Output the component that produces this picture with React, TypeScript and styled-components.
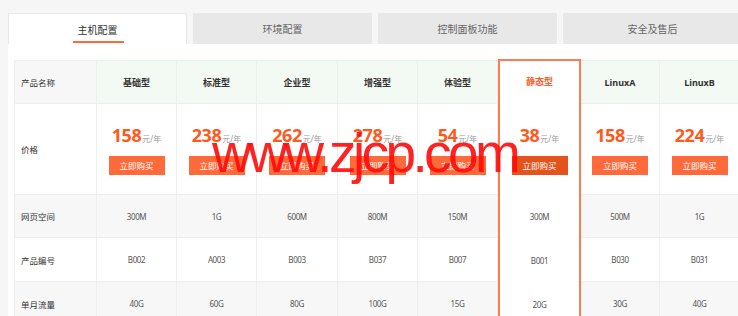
import React from 'react'
import styled, { createGlobalStyle, css } from 'styled-components'

const GlobalStyle = createGlobalStyle`
  html, body {
    margin: 0;
    padding: 0;
    background: #f6f6f6;
    overflow: hidden;
  }
  body {
    font-family: 'Noto Sans', 'Noto Sans CJK SC', sans-serif;
  }
`

const Page = styled.div`
  position: relative;
  padding: 13px 0 0 8px;
  width: 760px;
`

const Tabs = styled.div`
  display: flex;
  gap: 6px;
`

const Tab = styled.div<{ $active?: boolean }>`
  position: relative;
  width: 179px;
  height: 31px;
  box-sizing: border-box;
  display: flex;
  align-items: center;
  justify-content: center;
  font-size: 10px;
  color: #666;
  background: #e8e8e8;
  ${p => p.$active && css`
    background: #fff;
    color: #333;
    border: 1px solid #e8e8e8;
    border-bottom: none;
    &::after {
      content: '';
      position: absolute;
      left: 64px;
      width: 51px;
      bottom: 1px;
      height: 2px;
      background: #ff6a3a;
    }
  `}
`

const Panel = styled.div`
  background: #fff;
  padding: 16px 0 0 6px;
  height: 300px;
`

const Table = styled.div`
  display: flex;
  border-left: 1px solid #eeeeee;
  border-top: 1px solid #eeeeee;
`

const Column = styled.div<{ $width: number; $hot?: boolean }>`
  display: flex;
  flex-direction: column;
  width: ${p => p.$width}px;
  flex-shrink: 0;
  box-sizing: border-box;
  ${p => p.$hot && css`
    border: 2px solid #fb7e52;
    border-bottom: none;
    margin-top: -2px;
    background: #fff;
  `}
`

const Cell = styled.div<{ $h: number; $bg?: string; $left?: boolean; $hot?: boolean }>`
  height: ${p => p.$h}px;
  box-sizing: border-box;
  display: flex;
  flex-direction: column;
  align-items: ${p => (p.$left ? 'flex-start' : 'center')};
  justify-content: center;
  padding-left: ${p => (p.$left ? '6px' : '0')};
  background: ${p => p.$bg || '#fff'};
  border-right: 1px solid #eeeeee;
  border-bottom: 1px solid #eeeeee;
  font-size: 8px;
  letter-spacing: -0.4px;
  color: #555;
  ${p => p.$hot && css`
    background: #fff;
    border-right: none;
    border-bottom-color: transparent;
    padding-bottom: 3px;
  `}
`

const Label = styled.span`
  font-size: 8.5px;
  letter-spacing: 0;
  color: #333;
`

const PlanName = styled.span<{ $hot?: boolean }>`
  font-size: 9px;
  letter-spacing: 0;
  font-weight: bold;
  color: ${p => (p.$hot ? '#ff5a2a' : '#333')};
`

const Price = styled.div`
  display: flex;
  align-items: baseline;
  color: #ff5a1e;
  font-size: 18px;
  letter-spacing: -0.5px;
  font-weight: bold;
  line-height: 22px;
  margin-bottom: 6px;
  span {
    font-size: 8px;
    letter-spacing: 0;
    font-weight: normal;
    color: #999;
    margin-left: 1px;
  }
`

const BuyButton = styled.div<{ $hot?: boolean }>`
  width: 56px;
  height: 19px;
  line-height: 19px;
  text-align: center;
  font-size: 8.5px;
  letter-spacing: 0;
  color: #fff;
  background: ${p => (p.$hot ? '#e5531c' : '#ff6a3a')};
`

const Watermark = styled.div`
  position: absolute;
  left: 212px;
  top: 120px;
  font-family: 'Liberation Sans', Arial, sans-serif;
  font-size: 55px;
  letter-spacing: -3.6px;
  color: rgba(255, 10, 10, 0.9);
  line-height: 66px;
  white-space: nowrap;
  pointer-events: none;
`

interface Plan {
  name: string
  price: number
  space: string
  code: string
  traffic: string
  width: number
  hot?: boolean
}

const plans: Plan[] = [
  { name: '基础型', price: 158, space: '300M', code: 'B002', traffic: '40G', width: 80 },
  { name: '标准型', price: 238, space: '1G', code: 'A003', traffic: '60G', width: 80 },
  { name: '企业型', price: 262, space: '600M', code: 'B003', traffic: '80G', width: 81 },
  { name: '增强型', price: 278, space: '800M', code: 'B037', traffic: '100G', width: 80 },
  { name: '体验型', price: 54, space: '150M', code: 'B007', traffic: '15G', width: 80 },
  { name: '静态型', price: 38, space: '300M', code: 'B001', traffic: '20G', width: 83, hot: true },
  { name: 'LinuxA', price: 158, space: '500M', code: 'B030', traffic: '30G', width: 79 },
  { name: 'LinuxB', price: 224, space: '1G', code: 'B031', traffic: '40G', width: 80 },
]

const rows: { label: string; key: 'space' | 'code' | 'traffic'; h: number }[] = [
  { label: '网页空间', key: 'space', h: 43 },
  { label: '产品编号', key: 'code', h: 44 },
  { label: '单月流量', key: 'traffic', h: 44 },
]

const tabs = ['主机配置', '环境配置', '控制面板功能', '安全及售后']

const stripe = (i: number) => (i % 2 === 0 ? '#f7f7f7' : '#fff')

const App = () => {
  return (
    <Page>
      <GlobalStyle />
      <Tabs>
        {tabs.map((t, i) => (
          <Tab key={t} $active={i === 0}>{t}</Tab>
        ))}
      </Tabs>
      <Panel>
        <Table>
          <Column $width={82}>
            <Cell $h={43} $bg="#f7f7f7" $left><Label>产品名称</Label></Cell>
            <Cell $h={91} $left><Label>价格</Label></Cell>
            {rows.map((r, i) => (
              <Cell key={r.key} $h={r.h} $bg={stripe(i)} $left><Label>{r.label}</Label></Cell>
            ))}
          </Column>
          {plans.map(p => (
            <Column key={p.name} $width={p.width} $hot={p.hot}>
              <Cell $h={p.hot ? 45 : 43} $bg="#f3faf3" $hot={p.hot}>
                <PlanName $hot={p.hot}>{p.name}</PlanName>
              </Cell>
              <Cell $h={91} $hot={p.hot}>
                <Price>{p.price}<span>元/年</span></Price>
                <BuyButton $hot={p.hot}>立即购买</BuyButton>
              </Cell>
              {rows.map((r, i) => (
                <Cell key={r.key} $h={r.h} $bg={stripe(i)} $hot={p.hot}>{p[r.key]}</Cell>
              ))}
            </Column>
          ))}
        </Table>
      </Panel>
      <Watermark>www.zjcp.com</Watermark>
    </Page>
  )
}

export default App
